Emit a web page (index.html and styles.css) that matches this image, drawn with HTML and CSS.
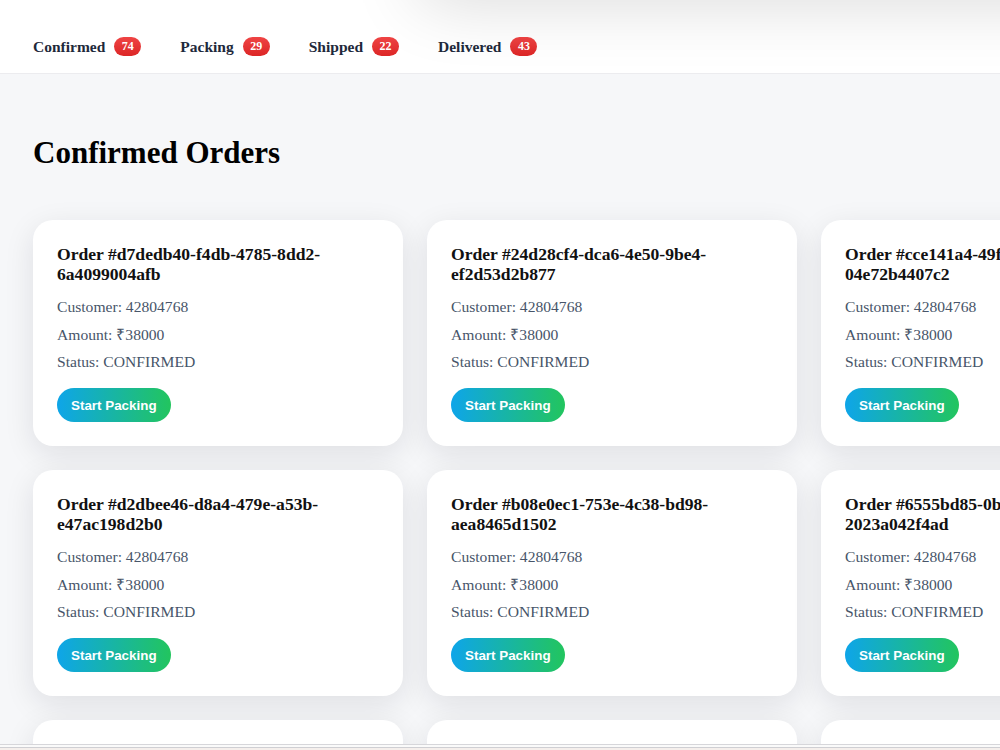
FILE: index.html
```html
<!DOCTYPE html>
<html lang="en">
<head>
    <meta charset="UTF-8">
    <meta name="viewport" content="width=device-width, initial-scale=1.0">
    <title>Orders</title>
    <link rel="stylesheet" href="styles.css">
</head>
<body>
    <!-- Status Tabs -->
    <header class="tabs-bar">
        <div class="top-shadow"></div>
        <a class="tab">Confirmed <span class="badge">74</span></a>
        <a class="tab">Packing <span class="badge">29</span></a>
        <a class="tab">Shipped <span class="badge">22</span></a>
        <a class="tab">Delivered <span class="badge">43</span></a>
    </header>

    <main class="orders-page">
        <h1>Confirmed Orders</h1>

        <div class="orders-grid">
            <div class="order-card">
                <h3>Order #d7dedb40-f4db-4785-8dd2-6a4099004afb</h3>
                <div class="order-info">
                    <p>Customer: 42804768</p>
                    <p>Amount: ₹38000</p>
                    <p>Status: CONFIRMED</p>
                </div>
                <button class="pack-btn">Start Packing</button>
            </div>
            <div class="order-card">
                <h3>Order #24d28cf4-dca6-4e50-9be4-ef2d53d2b877</h3>
                <div class="order-info">
                    <p>Customer: 42804768</p>
                    <p>Amount: ₹38000</p>
                    <p>Status: CONFIRMED</p>
                </div>
                <button class="pack-btn">Start Packing</button>
            </div>
            <div class="order-card">
                <h3>Order #cce141a4-49f0-4c1e-9a3d-04e72b4407c2</h3>
                <div class="order-info">
                    <p>Customer: 42804768</p>
                    <p>Amount: ₹38000</p>
                    <p>Status: CONFIRMED</p>
                </div>
                <button class="pack-btn">Start Packing</button>
            </div>
            <div class="order-card">
                <h3>Order #d2dbee46-d8a4-479e-a53b-e47ac198d2b0</h3>
                <div class="order-info">
                    <p>Customer: 42804768</p>
                    <p>Amount: ₹38000</p>
                    <p>Status: CONFIRMED</p>
                </div>
                <button class="pack-btn">Start Packing</button>
            </div>
            <div class="order-card">
                <h3>Order #b08e0ec1-753e-4c38-bd98-aea8465d1502</h3>
                <div class="order-info">
                    <p>Customer: 42804768</p>
                    <p>Amount: ₹38000</p>
                    <p>Status: CONFIRMED</p>
                </div>
                <button class="pack-btn">Start Packing</button>
            </div>
            <div class="order-card">
                <h3>Order #6555bd85-0b1e-4f2a-8c7d-2023a042f4ad</h3>
                <div class="order-info">
                    <p>Customer: 42804768</p>
                    <p>Amount: ₹38000</p>
                    <p>Status: CONFIRMED</p>
                </div>
                <button class="pack-btn">Start Packing</button>
            </div>
            <div class="order-card"></div>
            <div class="order-card"></div>
            <div class="order-card"></div>
        </div>
    </main>

    <div class="bottom-strip"></div>
</body>
</html>
```

FILE: styles.css
```css
body {
    margin: 0;
    background: #f6f7f9;
    font-family: 'Liberation Serif', 'Times New Roman', serif;
    overflow: hidden;
    height: 100vh;
}

/* Tabs */
.tabs-bar {
    position: relative;
    display: flex;
    align-items: center;
    height: 53px;
    padding: 20px 33px 0;
    gap: 39px;
    background: #fff;
    border-bottom: 1px solid #ececef;
    overflow: hidden;
}

.top-shadow {
    position: absolute;
    top: -70px;
    left: 420px;
    right: -120px;
    height: 70px;
    box-shadow: 0 0 70px rgba(0, 0, 0, 0.16);
    background: #fff;
}

.tab {
    display: flex;
    align-items: center;
    gap: 9px;
    font-size: 15.5px;
    font-weight: bold;
    color: #1e293b;
    cursor: pointer;
}

.badge {
    display: inline-block;
    min-width: 27px;
    height: 19px;
    line-height: 19px;
    padding: 0 2px;
    border-radius: 10px;
    background: linear-gradient(to bottom, #ef4444, #dc2626);
    color: #fff;
    font-size: 12px;
    text-align: center;
    box-sizing: border-box;
}

/* Orders */
.orders-page {
    padding: 61px 33px 0;
}

h1 {
    margin: 0 0 49px;
    font-size: 31px;
    color: #000;
}

.orders-grid {
    display: grid;
    grid-template-columns: repeat(3, 370px);
    gap: 24px;
}

.order-card {
    background: #fff;
    border-radius: 20px;
    padding: 24px;
    min-height: 178px;
    box-shadow: 0 8px 30px rgba(15, 23, 42, 0.1);
}

.order-card h3 {
    margin: 0 0 14px;
    font-size: 17.6px;
    line-height: 20px;
    color: #111;
}

.order-info {
    display: flex;
    flex-direction: column;
    gap: 9.5px;
}

.order-info p {
    margin: 0;
    font-size: 15.6px;
    line-height: 18px;
    color: #475569;
}

.pack-btn {
    margin-top: 17px;
    height: 34px;
    padding: 0 14px;
    border: none;
    border-radius: 17px;
    background: linear-gradient(to right, #0ea5e9, #22c55e);
    color: #fff;
    font-family: 'Liberation Sans', Arial, sans-serif;
    font-size: 13.4px;
    font-weight: bold;
    cursor: pointer;
}

.bottom-strip {
    position: fixed;
    left: 0;
    right: 0;
    bottom: 0;
    height: 5px;
    border-top: 1px solid #d6d6da;
    background: #f5efec;
    box-shadow: inset 0 2px 0 #fafafa, inset 0 3px 0 #cfcfd3;
}
```
